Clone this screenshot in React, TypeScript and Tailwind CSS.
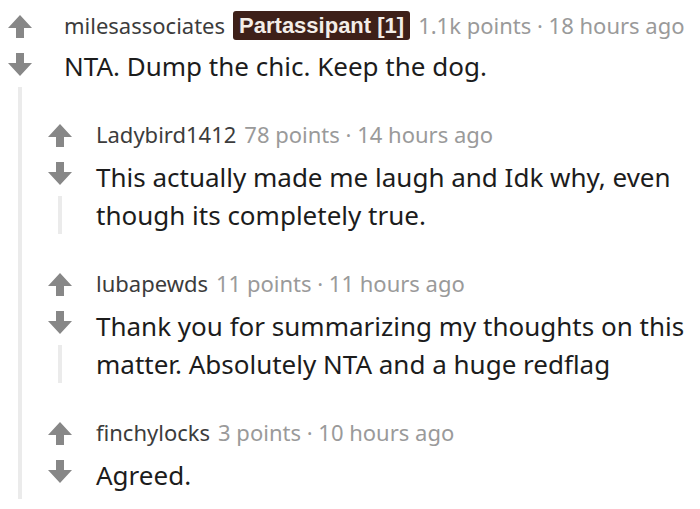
const font = "font-['Noto_Sans','Open_Sans',sans-serif]";

type Reply = {
  user: string;
  points: string;
  age: string;
  body: string[];
};

const REPLIES: Reply[] = [
  {
    user: "Ladybird1412",
    points: "78 points",
    age: "14 hours ago",
    body: [
      "This actually made me laugh and Idk why, even",
      "though its completely true.",
    ],
  },
  {
    user: "lubapewds",
    points: "11 points",
    age: "11 hours ago",
    body: [
      "Thank you for summarizing my thoughts on this",
      "matter. Absolutely NTA and a huge redflag",
    ],
  },
  {
    user: "finchylocks",
    points: "3 points",
    age: "10 hours ago",
    body: ["Agreed."],
  },
];

function UpArrow() {
  return (
    <svg width="24" height="23" viewBox="0 0 24 23" className="block">
      <path d="M12 0 L24 13 L16 13 L16 23 L8 23 L8 13 L0 13 Z" fill="#878787" />
    </svg>
  );
}

function DownArrow() {
  return (
    <svg width="24" height="23" viewBox="0 0 24 23" className="block">
      <path d="M8 0 L16 0 L16 10 L24 10 L12 23 L0 10 L8 10 Z" fill="#878787" />
    </svg>
  );
}

function Votes() {
  return (
    <div className="flex w-[40px] shrink-0 flex-col items-center pt-[4px]">
      <UpArrow />
      <div className="mt-[15px]">
        <DownArrow />
      </div>
      <div className="mt-[11px] w-[4px] flex-1 bg-[#ebebeb]" />
    </div>
  );
}

function Meta({ points, age }: { points: string; age: string }) {
  return (
    <span className="text-[22px] text-[#9a9a9a]">
      {points} · {age}
    </span>
  );
}

function ReplyRow({ r }: { r: Reply }) {
  return (
    <div className="flex pb-[5px] first:mt-[35px] not-first:mt-[30px]">
      <Votes />
      <div className="pl-[16px]">
        <div className="flex h-[28px] items-center gap-[8px] whitespace-nowrap">
          <span className="text-[22px] text-[#3c3c3c]">{r.user}</span>
          <Meta points={r.points} age={r.age} />
        </div>
        <div className="mt-[10px] whitespace-nowrap text-[26px] leading-[38px] text-[#1c1c1c]">
          {r.body.map((l) => (
            <div key={l}>{l}</div>
          ))}
        </div>
      </div>
    </div>
  );
}

export default function App() {
  return (
    <div className={`h-[509px] w-[700px] overflow-hidden bg-white ${font}`}>
      <div className="flex pt-[11px]">
        <Votes />
        <div className="flex-1">
          <div className="ml-[24px] flex h-[28px] items-center gap-[8px] whitespace-nowrap">
            <span className="text-[22px] text-[#3c3c3c]">milesassociates</span>
            <span className="rounded-[3px] bg-[#3e2019] px-[6px] font-['Liberation_Sans',Arial,sans-serif] text-[22px] font-bold leading-[29px] text-[#f3ede8]">
              Partassipant [1]
            </span>
            <Meta points="1.1k points" age="18 hours ago" />
          </div>
          <div className="ml-[24px] mt-[8px] whitespace-nowrap text-[26px] leading-[38px] text-[#1c1c1c]">
            NTA. Dump the chic. Keep the dog.
          </div>
          <div>
            {REPLIES.map((r) => (
              <ReplyRow key={r.user} r={r} />
            ))}
          </div>
        </div>
      </div>
    </div>
  );
}
